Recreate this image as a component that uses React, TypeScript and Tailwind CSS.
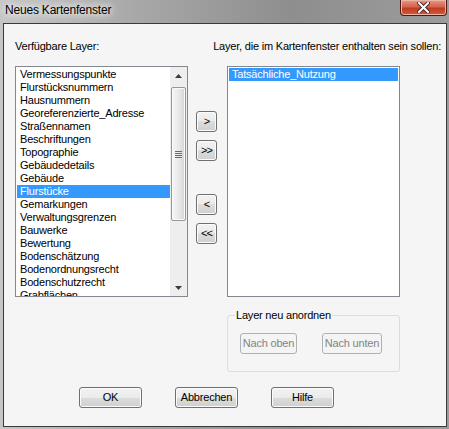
import React from 'react';

const available = [
  'Vermessungspunkte',
  'Flurstücksnummern',
  'Hausnummern',
  'Georeferenzierte_Adresse',
  'Straßennamen',
  'Beschriftungen',
  'Topographie',
  'Gebäudedetails',
  'Gebäude',
  'Flurstücke',
  'Gemarkungen',
  'Verwaltungsgrenzen',
  'Bauwerke',
  'Bewertung',
  'Bodenschätzung',
  'Bodenordnungsrecht',
  'Bodenschutzrecht',
  'Grabflächen',
];

const selectedLayers = ['Tatsächliche_Nutzung'];

const btn =
  'h-[21px] rounded-[3px] border border-[#707070] bg-[linear-gradient(#f2f2f2_0%,#ebebeb_50%,#dddddd_50%,#cfcfcf_100%)] shadow-[inset_0_0_0_1px_#fbfbfb] text-black flex items-center justify-center';

const disabledBtn =
  'h-[21px] rounded-[3px] border border-[#adb2b5] bg-[#f4f4f4] text-[#838383] flex items-center justify-center';

const ArrowButton: React.FC<{ label: string }> = ({ label }) => (
  <button className={`${btn} w-[21px] text-[11px] tracking-[-1px]`}>{label}</button>
);

const Scrollbar: React.FC = () => (
  <div className="w-[17px] h-full bg-[#eeeeee] flex flex-col items-center">
    <div className="h-[17px] w-full flex items-center justify-center">
      <svg width="7" height="4" viewBox="0 0 7 4">
        <path d="M3.5 0 L7 4 L0 4 Z" fill="#3c3c3c" />
      </svg>
    </div>
    <div className="mt-[3px] w-[15px] h-[134px] rounded-[2px] border border-[#979797] bg-[linear-gradient(90deg,#f7f7f7,#e6e6e6_60%,#d4d4d4)] shadow-[inset_0_0_0_1px_#fafafa] flex flex-col items-center justify-center gap-[1px]">
      <div className="w-[7px] h-px bg-[#6a6a6a]" />
      <div className="w-[7px] h-px bg-[#6a6a6a]" />
      <div className="w-[7px] h-px bg-[#6a6a6a]" />
      <div className="w-[7px] h-px bg-[#6a6a6a]" />
    </div>
    <div className="flex-1" />
    <div className="h-[17px] w-full flex items-center justify-center">
      <svg width="7" height="4" viewBox="0 0 7 4">
        <path d="M0 0 L7 0 L3.5 4 Z" fill="#3c3c3c" />
      </svg>
    </div>
  </div>
);

export default function App() {
  return (
    <div className="w-[449px] h-[429px] flex flex-col pl-[3px] pr-[2px] pb-[2px] bg-[linear-gradient(90deg,#c6c6c6_0%,#a8a8a8_30%,#8e8e8e_65%,#9c9c9c_100%)] font-['Liberation_Sans',Arial,sans-serif]">
      {/* title bar */}
      <div className="h-[23px] flex items-start justify-between">
        <span className="ml-[2px] mt-[2px] text-[12px] leading-[16px] tracking-[-0.2px] text-black [text-shadow:0_0_6px_#fff,0_0_10px_#eee,0_0_14px_#ddd]">
          Neues Kartenfenster
        </span>
        <div className="w-[47px] h-[16px] rounded-b-[4px] border border-t-0 border-[#4b1a12] bg-[linear-gradient(#e59a88_0%,#d6624c_45%,#c13b22_55%,#cf5a3f_100%)] shadow-[inset_0_0_0_1px_#f0b4a4] flex items-center justify-center">
          <svg width="13" height="11" viewBox="0 0 13 11">
            <path d="M2 1 L11 10 M11 1 L2 10" stroke="#4a2a26" strokeWidth="4" strokeLinecap="square" />
            <path d="M2 1 L11 10 M11 1 L2 10" stroke="#ffffff" strokeWidth="2" strokeLinecap="square" />
          </svg>
        </div>
      </div>

      {/* client area */}
      <div className="flex-1 border border-[#3a3a3a] bg-[#f5f5f5] text-[11px] leading-[13px] tracking-[-0.2px] text-black flex flex-col">
        <div className="mt-[16px] flex justify-between pl-[11px] pr-[5px]">
          <span>Verfügbare Layer:</span>
          <span>Layer, die im Kartenfenster enthalten sein sollen:</span>
        </div>

        <div className="mt-[13px] flex pl-[11px]">
          {/* available layers */}
          <div className="w-[173px] h-[231px] border border-[#828790] bg-white flex overflow-hidden">
            <ul className="flex-1 pl-px pt-px overflow-hidden">
              {available.map((name, i) => (
                <li
                  key={name}
                  className={`h-[13px] pl-[3px] whitespace-nowrap ${i === 9 ? 'bg-[#3399ff] text-white' : ''}`}
                >
                  {name}
                </li>
              ))}
            </ul>
            <Scrollbar />
          </div>

          {/* move buttons */}
          <div className="ml-[8px] mr-[10px] w-[21px] pt-[45px] flex flex-col">
            <ArrowButton label=">" />
            <div className="mt-[8px]">
              <ArrowButton label=">>" />
            </div>
            <div className="mt-[33px]">
              <ArrowButton label="<" />
            </div>
            <div className="mt-[8px]">
              <ArrowButton label="<<" />
            </div>
          </div>

          {/* selected layers */}
          <div className="w-[173px] flex flex-col">
            <ul className="h-[231px] border border-[#828790] bg-white p-px">
              {selectedLayers.map(name => (
                <li key={name} className="h-[13px] pl-[3px] bg-[#3399ff] text-white whitespace-nowrap">
                  {name}
                </li>
              ))}
            </ul>
            <div className="relative mt-[18px] h-[57px] rounded-[3px] border border-[#d5dfe5] pt-[17px] pl-[12px] flex">
              <span className="absolute top-[-7px] left-[7px] px-px bg-[#f5f5f5]">Layer neu anordnen</span>
              <button className={`${disabledBtn} w-[57px]`}>Nach oben</button>
              <button className={`${disabledBtn} w-[60px] ml-[25px]`}>Nach unten</button>
            </div>
          </div>
        </div>

        {/* dialog buttons */}
        <div className="mt-[15px] flex pl-[75px] gap-[33px]">
          <button className={`${btn} w-[63px] border-[#3c7fb1] shadow-[inset_0_0_0_1px_#a6dcf9]`}>OK</button>
          <button className={`${btn} w-[63px]`}>Abbrechen</button>
          <button className={`${btn} w-[63px]`}>Hilfe</button>
        </div>
      </div>
    </div>
  );
}
